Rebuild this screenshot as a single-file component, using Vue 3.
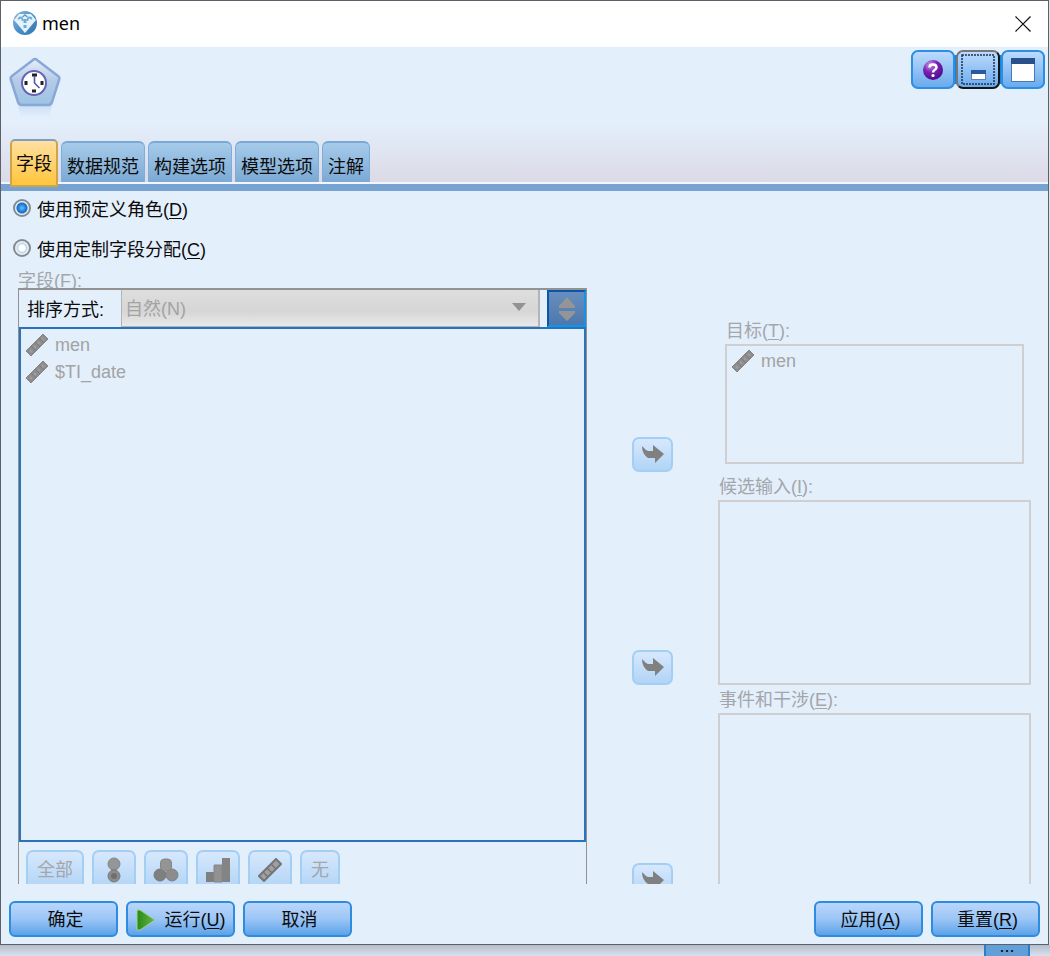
<script setup>
import { ref } from 'vue'

const tabs = ['字段', '数据规范', '构建选项', '模型选项', '注解']
const activeTab = ref('字段')
const role = ref('predefined')
const fields = ['men', '$TI_date']
const slots = [
  { id: 'target', label: '目标', key: 'T', items: ['men'], single: true },
  { id: 'inputs', label: '候选输入', key: 'I', items: [] },
  { id: 'events', label: '事件和干涉', key: 'E', items: [] }
]
</script>

<template>
  <div class="screen">
    <section class="dialog" role="dialog" aria-labelledby="title">
      <header class="titlebar">
        <svg class="logo" viewBox="0 0 24 24" aria-hidden="true">
          <defs>
            <linearGradient id="lg" x1="0" y1="0" x2="1" y2="1">
              <stop offset="0" stop-color="#8fbbe0" />
              <stop offset="0.5" stop-color="#5090c8" />
              <stop offset="1" stop-color="#2f74b4" />
            </linearGradient>
          </defs>
          <circle cx="12" cy="12" r="12" fill="url(#lg)" />
          <path d="M6 3h12l5 6-11 13L1 9z" fill="#e4f2fa" />
          <path d="M9.500 10V8.500a2 2 0 0 0-4 0M14.500 10V8.500a2 2 0 0 1 4 0" fill="none" stroke="#6fa9d2" stroke-width="1.800" />
          <path d="M12 8v4m0 2v3" fill="none" stroke="#6fa9d2" stroke-width="3" />
          <path d="M9.500 6l2.500-2 2.500 2" fill="none" stroke="#5b9acb" stroke-width="1.500" />
        </svg>
        <h1 id="title">men</h1>
        <button class="close" type="button" aria-label="关闭">
          <svg viewBox="0 0 16 16"><path d="M.5.5l15 15M15.500.5l-15 15" stroke="#111" stroke-width="1.200" /></svg>
        </button>
      </header>

      <div class="banner">
        <div class="banner-top">
          <svg class="node-icon" viewBox="0 0 54 62" aria-hidden="true">
            <defs>
              <linearGradient id="pent" x1="0" y1="0" x2="0" y2="1">
                <stop offset="0" stop-color="#e8eef9" />
                <stop offset="0.450" stop-color="#b7cbe8" />
                <stop offset="1" stop-color="#9cc3e4" />
              </linearGradient>
              <linearGradient id="refl" x1="0" y1="0" x2="0" y2="1">
                <stop offset="0" stop-color="#cfe1f5" />
                <stop offset="1" stop-color="#e3effb" />
              </linearGradient>
            </defs>
            <path d="M10 50h34l-3 12H13z" fill="url(#refl)" />
            <path d="M25 4Q27 2 29 4L50 20Q52 21 51 24L44 46Q43 49 40 49H14Q11 49 10 46L3 24Q2 21 4 20z" fill="url(#pent)" stroke="#88a8d8" stroke-width="2.500" />
            <circle cx="26" cy="27" r="12" fill="#fff" stroke="#6264b4" stroke-width="2" />
            <path d="M24 19h5M24 35h4M18 25v4M34 25v4" stroke="#222" stroke-width="3" />
            <path d="M26.500 20v7l5 5" fill="none" stroke="#5058a8" stroke-width="1.600" />
          </svg>
          <div class="tools">
            <button class="tool" type="button" aria-label="帮助">
              <svg width="22" height="22" viewBox="0 0 22 22">
                <defs>
                  <radialGradient id="help" cx="0.350" cy="0.250" r="0.800">
                    <stop offset="0" stop-color="#cb9be2" />
                    <stop offset="0.450" stop-color="#7a20b4" />
                    <stop offset="1" stop-color="#4c0b88" />
                  </radialGradient>
                </defs>
                <circle cx="11" cy="11" r="10" fill="url(#help)" />
                <path d="M7.500 8.500c0-4 7-4 7 0 0 2.500-3.500 2-3.500 5" fill="none" stroke="#fff" stroke-width="2.500" />
                <circle cx="11" cy="16.500" r="1.600" fill="#fff" />
              </svg>
            </button>
            <button class="tool focused" type="button" aria-label="最小化">
              <svg width="34" height="31" viewBox="0 0 34 31">
                <rect x="1" y="1" width="32" height="29" fill="none" stroke="#1c3252" stroke-width="1.500" stroke-dasharray="2 1" />
                <rect x="10.500" y="16.500" width="14" height="9" fill="#fff" stroke="#5a83bb" />
                <path d="M10 16h15v4H10z" fill="#2a5a9b" />
              </svg>
            </button>
            <button class="tool" type="button" aria-label="最大化">
              <svg width="24" height="24" viewBox="0 0 24 24">
                <rect x="0.500" y="0.500" width="23" height="23" fill="#fff" stroke="#4a79b8" />
                <path d="M0 0h24v6H0z" fill="#28508a" />
              </svg>
            </button>
          </div>
        </div>
        <nav class="tabs" role="tablist">
          <button
            v-for="t in tabs"
            :key="t"
            type="button"
            role="tab"
            class="tab"
            :class="{ active: t === activeTab }"
            :aria-selected="t === activeTab"
            @click="activeTab = t"
          >{{ t }}</button>
        </nav>
      </div>

      <main class="body">
        <div class="roles">
          <label><input v-model="role" type="radio" name="role" value="predefined" /><span>使用预定义角色(<u>D</u>)</span></label>
          <label><input v-model="role" type="radio" name="role" value="custom" /><span>使用定制字段分配(<u>C</u>)</span></label>
        </div>

        <div class="panes">
          <div class="source">
            <div id="fields-label" class="source-label">字段(<u>F</u>):</div>
            <div class="source-box">
              <div class="sort">
                <label for="sort">排序方式:</label>
                <div class="combo">
                  <select id="sort" disabled><option>自然(N)</option></select>
                  <svg viewBox="0 0 14 8" aria-hidden="true"><path d="M0 0h14L7 8z" fill="#929292" /></svg>
                </div>
                <button class="sort-dir" type="button" disabled aria-label="排序方向">
                  <svg width="18" height="26" viewBox="0 0 18 26"><path d="M9 1l8 9v2H1v-2zM1 15h16v2l-8 8-8-8z" fill="#959595" /></svg>
                </button>
              </div>
              <ul class="list" aria-labelledby="fields-label">
                <li v-for="f in fields" :key="f">
                  <svg class="ruler" viewBox="0 0 24 24"><path d="M1 18L18 1l5 5L6 23z" fill="#8d8d8d" stroke="#858585" /><path d="M6 13l5 5M10 9l5 5M14 5l5 5" stroke="#7b7b7b" /><path d="M5 17l2 2M9 13l2 2M13 9l2 2M17 5l2 2" stroke="#9e9e9e" stroke-width="2" /></svg>
                  <span>{{ f }}</span>
                </li>
              </ul>
              <div class="filters">
                <button type="button" disabled class="soft word">全部</button>
                <button type="button" disabled class="soft" aria-label="标志">
                  <svg width="14" height="26" viewBox="0 0 14 26"><circle cx="7" cy="7" r="6" fill="#969696" stroke="#858585" /><path d="M4 12h6v3H4z" fill="#858585" /><circle cx="7" cy="19" r="6" fill="#8c8c8c" stroke="#7b7b7b" /><circle cx="7" cy="19" r="3" fill="#6f6f6f" /></svg>
                </button>
                <button type="button" disabled class="soft" aria-label="名义">
                  <svg width="26" height="24" viewBox="0 0 26 24"><circle cx="7" cy="17" r="6" fill="#7f7f7f" stroke="#777" /><circle cx="19" cy="17" r="6" fill="#8c8c8c" stroke="#818181" /><rect x="7.500" y="1" width="11" height="12" rx="4" fill="#949494" stroke="#848484" /></svg>
                </button>
                <button type="button" disabled class="soft" aria-label="有序">
                  <svg width="26" height="26" viewBox="0 0 26 26"><path d="M1 15h8v10H1z" fill="#7f7f7f" /><path d="M9 8h8v17H9z" fill="#929292" stroke="#868686" /><path d="M17 1h8v24h-8z" fill="#848484" /></svg>
                </button>
                <button type="button" disabled class="soft" aria-label="连续">
                  <svg width="24" height="24" viewBox="0 0 24 24"><path d="M1 18L18 1l5 5L6 23z" fill="#a0a0a0" stroke="#757575" stroke-width="2" /><path d="M5 14l5 5M9 10l5 5M13 6l5 5" stroke="#757575" stroke-width="1.500" /></svg>
                </button>
                <button type="button" disabled class="soft none">无</button>
              </div>
            </div>
          </div>

          <div class="slots">
            <div v-for="s in slots" :key="s.id" class="slot">
              <button type="button" disabled class="soft move" :aria-label="'移至' + s.label">
                <svg width="22" height="18" viewBox="0 0 22 18"><path d="M0 1l4 4 2 1h5V0l11 9-9 9v-5H6Q0 9 0 1z" fill="#808080" /></svg>
              </button>
              <div class="target" :class="{ single: s.single }">
                <div :id="s.id" class="slot-label">{{ s.label }}(<u>{{ s.key }}</u>):</div>
                <ul class="drop" :aria-labelledby="s.id">
                  <li v-for="i in s.items" :key="i">
                    <svg class="ruler" viewBox="0 0 24 24"><path d="M1 18L18 1l5 5L6 23z" fill="#8d8d8d" stroke="#858585" /><path d="M6 13l5 5M10 9l5 5M14 5l5 5" stroke="#7b7b7b" /><path d="M5 17l2 2M9 13l2 2M13 9l2 2M17 5l2 2" stroke="#9e9e9e" stroke-width="2" /></svg>
                    <span>{{ i }}</span>
                  </li>
                </ul>
              </div>
            </div>
          </div>
        </div>
      </main>

      <footer class="actions">
        <button type="button" class="action">确定</button>
        <button type="button" class="action">
          <svg width="20" height="22" viewBox="0 0 20 22" aria-hidden="true">
            <defs>
              <linearGradient id="run" x1="0" y1="0" x2="1" y2="0">
                <stop offset="0" stop-color="#278a12" />
                <stop offset="1" stop-color="#6cb552" />
              </linearGradient>
            </defs>
            <path d="M1 1h3l15 10L4 21H1z" fill="url(#run)" stroke="#9fd391" />
          </svg>
          <span>运行(<u>U</u>)</span>
        </button>
        <button type="button" class="action">取消</button>
        <span class="spacer"></span>
        <button type="button" class="action">应用(<u>A</u>)</button>
        <button type="button" class="action">重置(<u>R</u>)</button>
      </footer>
    </section>
    <div class="behind"><button type="button" class="more">...</button></div>
  </div>
</template>

<style>
body {
  margin: 0;
  background: #d9e3ef;
}
</style>

<style scoped>
* {
  box-sizing: border-box;
}
.screen {
  display: flex;
  flex-direction: column;
  height: 100vh;
  overflow: hidden;
  font: 18px/24px "Liberation Sans", "Noto Sans CJK SC", sans-serif;
  color: #0c0c0c;
}
button,
select {
  font: inherit;
  color: inherit;
  padding: 0;
  margin: 0;
}
svg {
  display: block;
  flex: none;
}
ul {
  list-style: none;
  margin: 0;
  padding: 0;
}
u {
  text-underline-offset: 2px;
  text-decoration-thickness: 1px;
}
.dialog {
  flex: 1;
  min-height: 0;
  margin-right: 1px;
  display: flex;
  flex-direction: column;
  border: 1px solid #5d6068;
  background: #e3effb;
}
.titlebar {
  flex: none;
  height: 46px;
  display: flex;
  align-items: center;
  padding: 0 17px 0 12px;
  background: #fff;
}
.logo {
  width: 24px;
  height: 24px;
  margin-bottom: 2px;
}
.titlebar h1 {
  flex: 1;
  margin: 0 0 2px 5px;
  font: 18px/24px "Noto Sans", "Open Sans", sans-serif;
  color: #000;
}
.close {
  border: 0;
  background: none;
}
.close svg {
  width: 16px;
  height: 16px;
}
.banner {
  flex: none;
  height: 144px;
  display: flex;
  flex-direction: column;
  justify-content: space-between;
  border-bottom: 7px solid #76a3d2;
  background: linear-gradient(#e3effb 55%, #dcd9e6);
  box-shadow: inset 0 -2px #f2f5fb;
}
.banner-top {
  display: flex;
  justify-content: space-between;
  padding: 3px 3px 0 7px;
}
.node-icon {
  width: 54px;
  height: 62px;
  margin-top: 6px;
}
.tools {
  display: flex;
  align-self: flex-start;
  gap: 1px;
  border-radius: 8px;
  background: linear-gradient(transparent 5px, #1683dc 5px 34px, transparent 34px);
}
.tool {
  width: 44px;
  height: 39px;
  display: grid;
  place-items: center;
  border: 2px solid #2d8fe4;
  border-radius: 7px;
  background: linear-gradient(#bcdafd, #6aabec);
}
.tool.focused {
  border-color: #777 #151515 #151515 #777;
}
.tabs {
  display: flex;
  align-items: flex-end;
  gap: 3px;
  padding-left: 9px;
  height: 44px;
}
.tab {
  height: 41px;
  padding: 8px 5px 0;
  margin-bottom: 2px;
  border: 1px solid #7fadda;
  border-top: 2px solid #78a9d8;
  border-bottom: 0;
  border-radius: 6px 6px 0 0;
  background: linear-gradient(#a6cbea, #7ba9d4);
}
.tab.active {
  height: 48px;
  align-self: flex-start;
  margin: -1px 0 0;
  padding: 2px 4px 0;
  border: 2px solid #d0a548;
  border-top-color: #7b9fc6;
  border-radius: 5px 5px 0 0;
  background: linear-gradient(#ffe0a0, #ffc53d);
}
.body {
  flex: 1;
  min-height: 0;
  overflow: hidden;
}
.roles {
  display: flex;
  flex-direction: column;
  align-items: flex-start;
  gap: 6px;
  padding-left: 12px;
}
.roles label {
  display: flex;
  align-items: center;
  gap: 6px;
  height: 34px;
}
.roles span {
  padding-top: 3px;
}
.roles input {
  appearance: none;
  width: 18px;
  height: 18px;
  margin: 0;
  border: 2px solid #848b90;
  border-radius: 50%;
  background: radial-gradient(circle, #fff 0 30%, #b9d5f0 45%, #e9eff3 60%);
}
.roles input:checked {
  background: radial-gradient(circle, #62adf2 0 8%, #1672ce 45%, #1672ce 50%, #eef3f7 62%);
}
.panes {
  display: grid;
  grid-template-columns: minmax(0, 569fr) minmax(0, 399fr);
  gap: 45px;
  padding: 0 17px;
}
.source-label {
  height: 23px;
  line-height: 33px;
  overflow: hidden;
  color: #a3a6aa;
}
.source-box {
  border: 2px solid #929292;
  border-left-width: 1px;
  border-right-width: 1px;
}
.sort {
  display: flex;
  align-items: center;
  height: 37px;
  padding-left: 8px;
}
.sort label {
  width: 94px;
  padding-top: 2px;
}
.combo {
  position: relative;
  flex: 1;
  height: 37px;
  margin-right: 7px;
}
.combo select {
  appearance: none;
  width: 100%;
  height: 100%;
  padding: 2px 3px 0;
  border: solid #b4b4b4;
  border-width: 0 2px 1px 1px;
  border-radius: 0;
  background: linear-gradient(#dedede, #d6d6d6 60%, #e9e9e9);
  color: #a3a3a3;
  opacity: 1;
}
.combo svg {
  position: absolute;
  right: 14px;
  top: 13px;
  width: 14px;
  height: 8px;
  pointer-events: none;
}
.sort-dir {
  width: 39px;
  height: 37px;
  display: grid;
  place-items: center;
  border: 2px solid;
  border-color: #0c55a8 #1193ec #1193ec #0c55a8;
  background: linear-gradient(#678fbe, #4c78ae);
}
.list {
  min-height: 515px;
  border: 2px solid #2a73b9;
  padding: 2px 4px;
  color: #a3a3a3;
}
.list li,
.drop li {
  display: flex;
  align-items: center;
  gap: 6px;
  height: 27px;
}
.ruler {
  width: 24px;
  height: 24px;
}
.filters {
  display: flex;
  gap: 8px;
  padding: 8px 7px 6px;
}
.soft {
  width: 44px;
  height: 40px;
  display: grid;
  place-items: center;
  border: 2px solid #a3cff5;
  border-radius: 7px;
  background: linear-gradient(#d7e8fd, #b1d4f6);
  color: #a3a6aa;
}
.soft.word {
  width: 58px;
}
.soft.none {
  width: 40px;
}
.slots {
  display: flex;
  flex-direction: column;
}
.slot {
  display: grid;
  grid-template-columns: 41px minmax(0, 1fr);
  gap: 45px;
  align-items: end;
  min-height: 213px;
}
.slot:first-child {
  min-height: 207px;
}
.soft.move {
  width: 41px;
  height: 35px;
  padding-bottom: 2px;
}
.target.single {
  padding: 0 7px 8px;
}
.slot-label {
  height: 28px;
  padding-left: 1px;
  line-height: 30px;
  color: #a3a6aa;
}
.drop {
  min-height: 185px;
  padding: 1px 4px;
  border: 2px solid #cfcfd2;
  color: #a3a3a3;
}
.single .drop {
  min-height: 120px;
}
.actions {
  flex: none;
  height: 60px;
  display: flex;
  align-items: flex-start;
  gap: 8px;
  padding: 17px 8px 0;
}
.action {
  width: 109px;
  height: 36px;
  display: flex;
  align-items: center;
  justify-content: center;
  padding: 2px 0 0 4px;
  border: 2px solid #2d8be0;
  border-radius: 6px;
  background: linear-gradient(#bad6fc, #9bc6f6 50%, #5da2e8);
}
.action:has(svg) {
  padding-left: 0;
}
.action svg {
  margin-right: 9px;
}
.spacer {
  flex: 1;
}
.behind {
  flex: none;
  height: 11px;
  display: flex;
  justify-content: flex-end;
  padding-right: 20px;
  overflow: hidden;
  background: linear-gradient(#b4bdc9, #d8e1ed);
}
.more {
  width: 46px;
  height: 24px;
  border: 2px solid #267fce;
  border-top: 0;
  border-radius: 0;
  background: #629fd9;
  line-height: 2px;
  padding-bottom: 28px;
}
</style>
